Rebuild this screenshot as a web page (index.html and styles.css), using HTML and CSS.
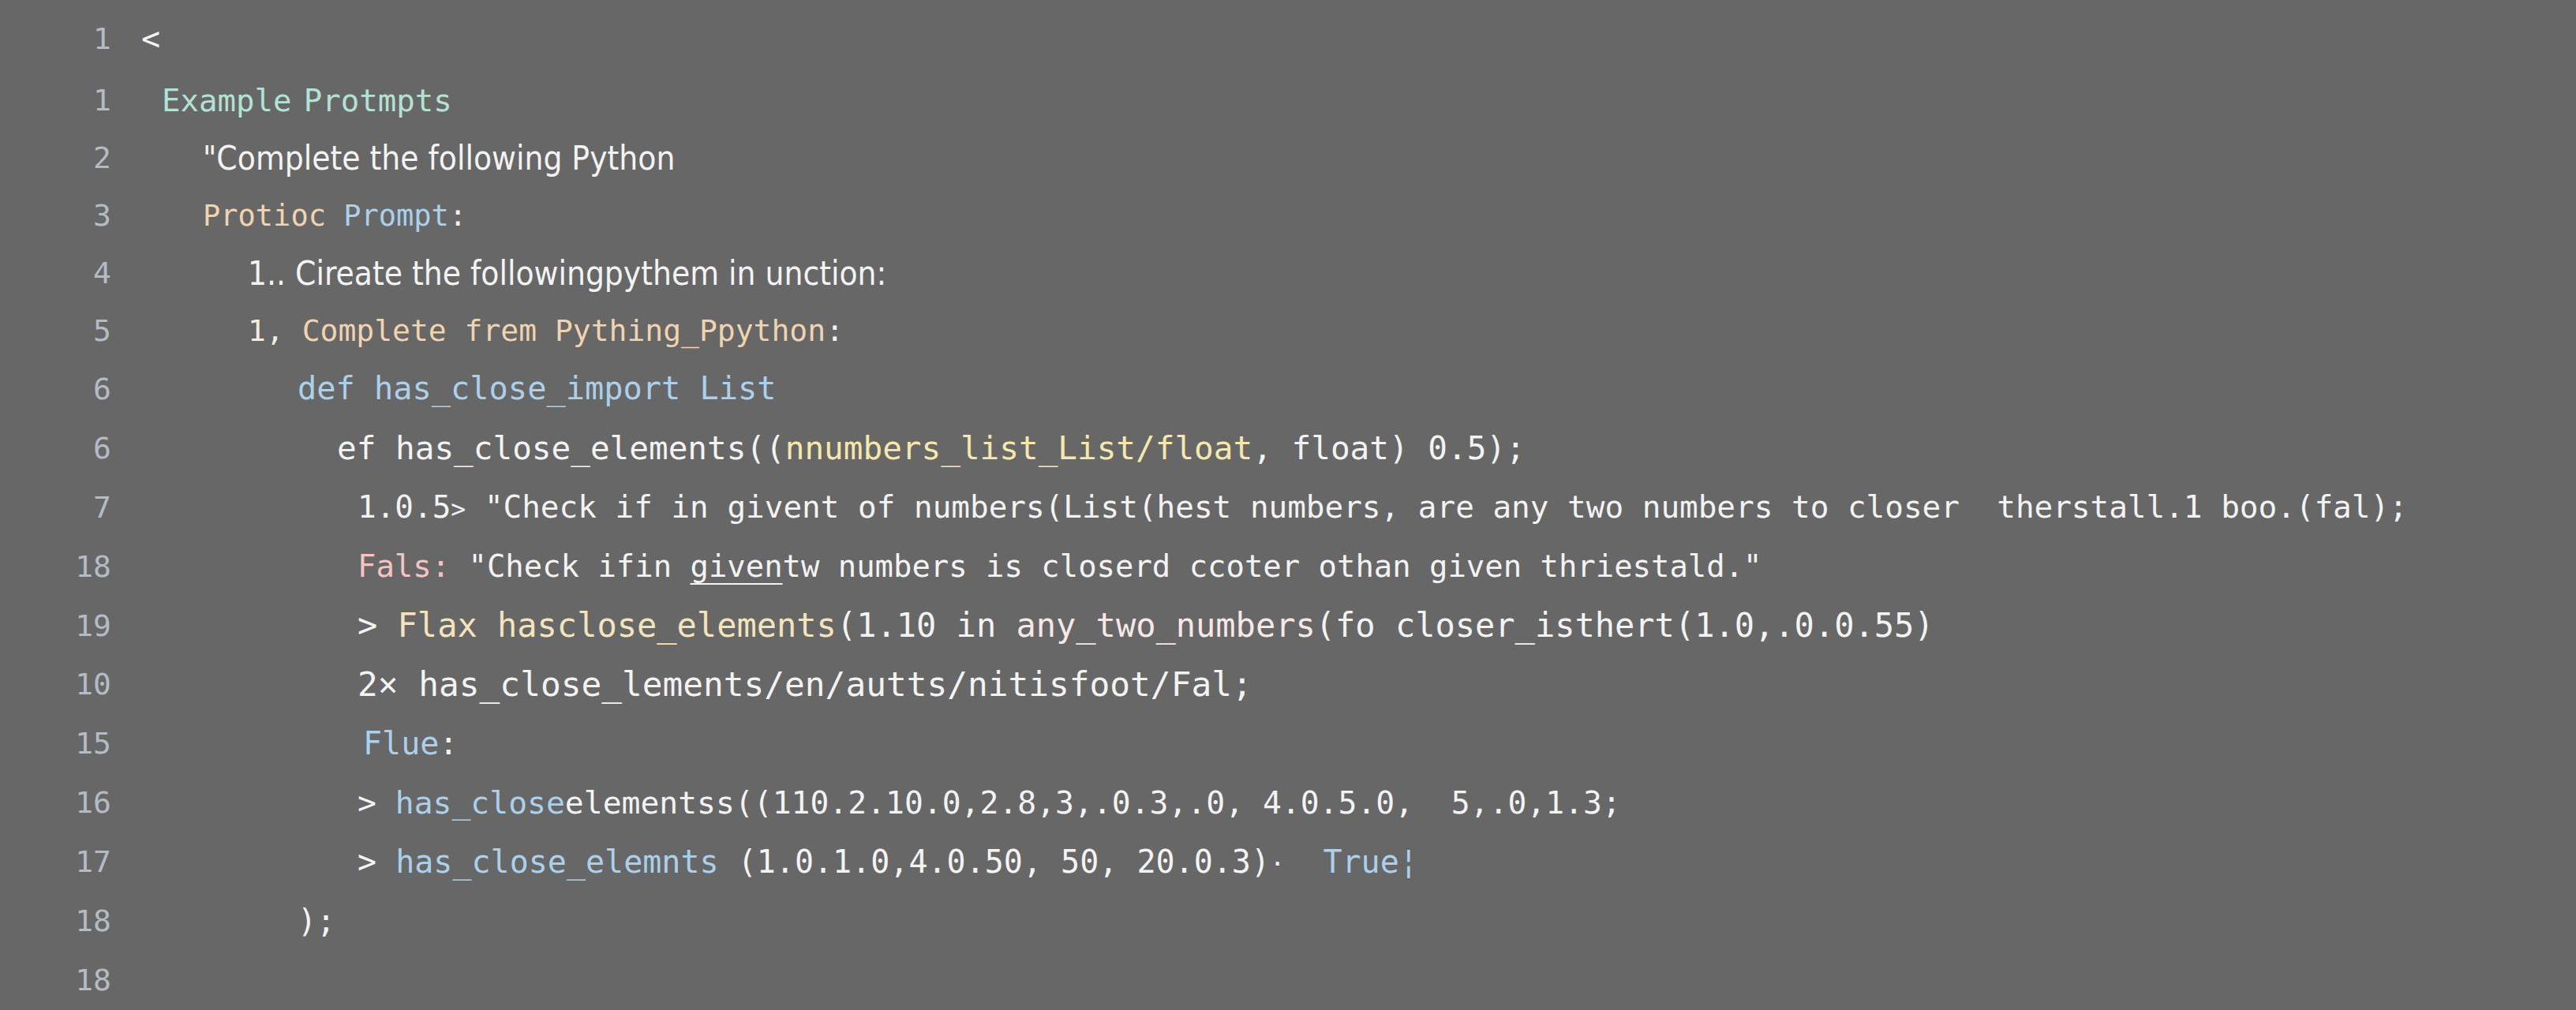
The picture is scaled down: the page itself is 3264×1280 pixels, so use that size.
FILE: index.html
```html
<!DOCTYPE html>
<html lang="en">
<head>
<meta charset="utf-8">
<title>Example Prompts</title>
<link rel="stylesheet" href="styles.css">
</head>
<body>
<main class="editor">
  <div class="row first"><span class="ln">1</span><span class="code in-a f40">&lt;</span></div>
  <div class="row short"><span class="ln">1</span><span class="code in-b f39 mint">Example<span class="tight"> </span>Protmpts</span></div>
  <div class="row short"><span class="ln">2</span><span class="code in-c prose f42">"Complete the following Python</span></div>
  <div class="row short"><span class="ln">3</span><span class="code in-c f37"><span class="peach">Protioc</span> <span class="blue">Prompt</span>:</span></div>
  <div class="row short"><span class="ln">4</span><span class="code in-d prose f42">1.. Cireate the followingpythem in unction:</span></div>
  <div class="row short"><span class="ln">5</span><span class="code in-d f38"><span class="pale">1,</span> <span class="peach">Complete frem Pything_Ppython</span>:</span></div>
  <div class="row"><span class="ln">6</span><span class="code in-e f40-3 blue">def has_close_import List</span></div>
  <div class="row"><span class="ln">6</span><span class="code in-f f41">ef has_close_elements((<span class="yellow">nnumbers_list_List/float</span>, float) 0.5);</span></div>
  <div class="row"><span class="ln">7</span><span class="code in-g f39-3">1.0.5<span class="small">&gt;</span> "Check if in givent of numbers(List(hest numbers, are any two numbers to closer&nbsp; therstall.1 boo.(fal);</span></div>
  <div class="row"><span class="ln">18</span><span class="code in-g f38-9"><span class="pink">Fals:</span> "Check ifin <span class="under">given</span>tw numbers is closerd ccoter othan given thriestald."</span></div>
  <div class="row"><span class="ln">19</span><span class="code in-g f42">&gt; <span class="cream">Flax hasclose_elements</span>(1.10 in <span class="rose">any_two_numbers</span>(fo closer_isthert(1.0,.0.0.55)</span></div>
  <div class="row"><span class="ln">10</span><span class="code in-g f42-8">2× has_close_lements/en/autts/nitisfoot/Fal;</span></div>
  <div class="row"><span class="ln">15</span><span class="code in-h f40 blue">Flue<span class="white">:</span></span></div>
  <div class="row"><span class="ln">16</span><span class="code in-g f39-7">&gt; <span class="blue">has_close</span>elementss((110.2.10.0,2.8,3,.0.3,.0, 4.0.5.0,&nbsp; 5,.0,1.3;</span></div>
  <div class="row"><span class="ln">17</span><span class="code in-g f40">&gt; <span class="blue">has_close_elemnts</span> (1.0.1.0,4.0.50, 50, 20.0.3)<span class="small">·</span>&nbsp; <span class="blue">True¦</span></span></div>
  <div class="row"><span class="ln">18</span><span class="code in-e f40">);</span></div>
  <div class="row"><span class="ln">18</span><span class="code"></span></div>
</main>
</body>
</html>
```
FILE: styles.css
```css
html, body {
  margin: 0;
  padding: 0;
  background: #676767;
}

body {
  width: 3264px;
  height: 1280px;
  overflow: hidden;
  color: #f3f3f3;
  font-family: "DejaVu Sans Mono", "Liberation Mono", monospace;
}

.editor {
  display: flex;
  flex-direction: column;
  padding-top: 12px;
}

.row {
  display: flex;
  align-items: center;
  height: 74.9px;
  white-space: pre;
}

.row.first {
  height: 74px;
  margin-bottom: 4.5px;
}

.row.short {
  height: 73px;
}

.ln {
  flex: none;
  width: 141px;
  text-align: right;
  font-size: 38px;
  color: #b3bcc5;
}

.code {
  flex: none;
  font-size: 40px;
}

.prose {
  font-family: "DejaVu Sans Condensed", "DejaVu Sans", sans-serif;
  font-stretch: semi-condensed;
}

.tight {
  letter-spacing: -8px;
}

/* indentation levels */
.in-a { padding-left: 38px; }
.in-b { padding-left: 64px; }
.in-c { padding-left: 116px; }
.in-d { padding-left: 173px; }
.in-e { padding-left: 236px; }
.in-f { padding-left: 286px; }
.in-g { padding-left: 312px; }
.in-h { padding-left: 319px; }

/* sizes */
.f37 { font-size: 37px; }
.f38 { font-size: 38px; }
.f38-9 { font-size: 38.9px; }
.f39 { font-size: 39px; }
.f39-3 { font-size: 39.3px; }
.f39-7 { font-size: 39.7px; }
.f40 { font-size: 40px; }
.f40-3 { font-size: 40.3px; }
.f41 { font-size: 41px; }
.f42 { font-size: 42px; }
.f42-8 { font-size: 42.8px; }

/* colours */
.mint { color: #b3e2d4; }
.peach { color: #f0d3b0; }
.blue { color: #acd0ea; }
.yellow { color: #f6e7ae; }
.cream { color: #f4e4bd; }
.pink { color: #f6c3c3; }
.rose { color: #f7e8e8; }
.pale { color: #f3ecdf; }
.white { color: #f3f3f3; }

.small { font-size: 0.8em; }

.under {
  text-decoration: underline;
  text-decoration-thickness: 2px;
  text-underline-offset: 8px;
}
```
